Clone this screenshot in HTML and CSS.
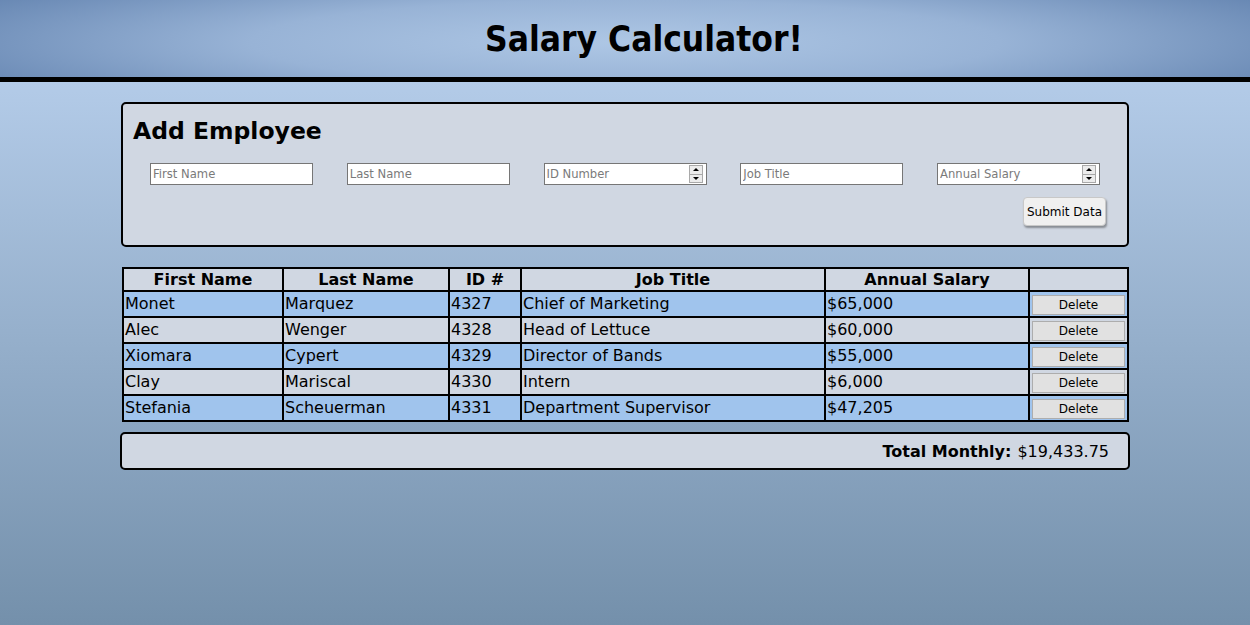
FILE: index.html
```html
<!DOCTYPE html>
<html>
<head>
<meta charset="utf-8">
<title>Salary Calculator</title>
<link rel="stylesheet" href="styles.css">
</head>
<body>
<header class="top">
  <h1 class="title">Salary Calculator!</h1>
</header>
<main class="main">
  <section class="card form-card">
    <h2 class="card-title">Add Employee</h2>
    <div class="inputs">
      <input class="field" type="text" placeholder="First Name">
      <input class="field" type="text" placeholder="Last Name">
      <span class="num-wrap">
        <input class="field" type="number" placeholder="ID Number">
        <span class="spin"><span class="spin-up"></span><span class="spin-down"></span></span>
      </span>
      <input class="field" type="text" placeholder="Job Title">
      <span class="num-wrap">
        <input class="field" type="number" placeholder="Annual Salary">
        <span class="spin"><span class="spin-up"></span><span class="spin-down"></span></span>
      </span>
    </div>
    <div class="actions">
      <button class="submit">Submit Data</button>
    </div>
  </section>

  <table class="emp">
    <thead>
      <tr>
        <th class="c1">First Name</th>
        <th class="c2">Last Name</th>
        <th class="c3">ID #</th>
        <th class="c4">Job Title</th>
        <th class="c5">Annual Salary</th>
        <th class="c6"></th>
      </tr>
    </thead>
    <tbody>
      <tr><td>Monet</td><td>Marquez</td><td>4327</td><td>Chief of Marketing</td><td>$65,000</td><td class="btn-cell"><button class="del">Delete</button></td></tr>
      <tr><td>Alec</td><td>Wenger</td><td>4328</td><td>Head of Lettuce</td><td>$60,000</td><td class="btn-cell"><button class="del">Delete</button></td></tr>
      <tr><td>Xiomara</td><td>Cypert</td><td>4329</td><td>Director of Bands</td><td>$55,000</td><td class="btn-cell"><button class="del">Delete</button></td></tr>
      <tr><td>Clay</td><td>Mariscal</td><td>4330</td><td>Intern</td><td>$6,000</td><td class="btn-cell"><button class="del">Delete</button></td></tr>
      <tr><td>Stefania</td><td>Scheuerman</td><td>4331</td><td>Department Supervisor</td><td>$47,205</td><td class="btn-cell"><button class="del">Delete</button></td></tr>
    </tbody>
  </table>

  <section class="card total-card">
    <span class="total-label">Total Monthly:</span> <span class="total-value">$19,433.75</span>
  </section>
</main>
</body>
</html>
```

FILE: styles.css
```css
html, body {
  margin: 0;
  padding: 0;
}
body {
  font-family: "DejaVu Sans", Verdana, sans-serif;
  min-height: 625px;
  background: linear-gradient(to bottom, #b3cbe8 0px, #b3cbe8 82px, #7490ab 625px);
  color: #000;
}
.top {
  height: 77px;
  border-bottom: 5px solid #000;
  background: radial-gradient(ellipse 60% 110% at 50% 55%, #aec7e5 0%, #98b3d6 50%, #6686b2 100%);
  display: flex;
  align-items: center;
  justify-content: center;
}
.title {
  margin: 0;
  padding-left: 38px;
  font-family: "DejaVu Sans Condensed", "DejaVu Sans", sans-serif;
  font-weight: bold;
  font-size: 35px;
}
.main {
  width: 1010px;
  padding: 20px 0 0 120px;
  display: flex;
  flex-direction: column;
  align-items: flex-start;
}
.card {
  box-sizing: border-box;
  background: #d0d7e2;
  border: 2px solid #000;
  border-radius: 5px;
}
.form-card {
  width: 1008px;
  height: 145px;
  padding: 12px 21px 0 10px;
  margin-left: 1px;
}
.card-title {
  margin: 0;
  font-size: 23.5px;
  font-weight: bold;
  line-height: 30px;
}
.inputs {
  display: flex;
  justify-content: space-between;
  padding: 17px 6px 0 17px;
}
.num-wrap {
  position: relative;
  display: block;
  width: 163px;
  height: 22px;
}
.field {
  box-sizing: border-box;
  width: 163px;
  height: 22px;
  margin: 0;
  border: 1px solid #767676;
  background: #fff;
  font-family: "DejaVu Sans", Verdana, sans-serif;
  font-size: 11.6px;
  padding: 0 2px;
  color: #000;
  -moz-appearance: textfield;
}
.field::placeholder {
  color: #7a7a7a;
}
.field::-webkit-inner-spin-button,
.field::-webkit-outer-spin-button {
  -webkit-appearance: none;
  margin: 0;
}
.spin {
  position: absolute;
  right: 4px;
  top: 2px;
  width: 14px;
  height: 18px;
  display: flex;
  flex-direction: column;
}
.spin-up, .spin-down {
  position: relative;
  flex: 1;
  box-sizing: border-box;
  background: #ececec;
  border: 1px solid #a9a9a9;
}
.spin-down {
  border-top: none;
}
.spin-up::after, .spin-down::after {
  content: "";
  position: absolute;
  left: 50%;
  top: 50%;
  margin-left: -3px;
  width: 0;
  height: 0;
  border-left: 3px solid transparent;
  border-right: 3px solid transparent;
}
.spin-up::after {
  margin-top: -2px;
  border-bottom: 3px solid #000;
}
.spin-down::after {
  margin-top: -1px;
  border-top: 3px solid #000;
}
.actions {
  display: flex;
  justify-content: flex-end;
  padding-top: 12px;
}
.submit {
  box-sizing: border-box;
  width: 83px;
  height: 29px;
  font-family: "DejaVu Sans", Verdana, sans-serif;
  font-size: 12px;
  background: #f0f0f0;
  border: 1px solid #c8c8c8;
  border-radius: 4px;
  box-shadow: 1px 2px 2px rgba(0,0,0,0.35);
  color: #000;
  padding: 0;
}
.emp {
  margin-top: 20px;
  margin-left: 2px;
  width: 1007px;
  border-collapse: collapse;
  border: 2px solid #000;
  font-size: 16px;
}
.emp th, .emp td {
  border: 2px solid #000;
  padding: 0 1px;
}
.emp th {
  height: 21px;
  line-height: 21px;
  background: #d0d7e2;
  font-weight: bold;
  text-align: center;
}
.emp td {
  height: 24px;
  line-height: 24px;
  text-align: left;
}
.emp tbody tr:nth-child(odd) td {
  background: #a0c4ed;
}
.emp tbody tr:nth-child(even) td {
  background: #d0d7e2;
}
.c1 { width: 156px; }
.c2 { width: 162px; }
.c3 { width: 68px; }
.c4 { width: 300px; }
.c5 { width: 200px; }
.btn-cell {
  text-align: center !important;
}
.del {
  box-sizing: border-box;
  width: 93px;
  height: 20px;
  padding: 0;
  font-family: "DejaVu Sans", Verdana, sans-serif;
  font-size: 12px;
  background: #e1e1e1;
  border: 1px solid #adadad;
  color: #000;
  vertical-align: middle;
}
.total-card {
  margin-top: 10px;
  width: 1010px;
  height: 38px;
  flex: 0 0 38px;
  padding: 0 19px;
  display: flex;
  align-items: center;
  justify-content: flex-end;
  font-size: 16px;
  gap: 6px;
}
.total-label {
  font-weight: bold;
}
```
